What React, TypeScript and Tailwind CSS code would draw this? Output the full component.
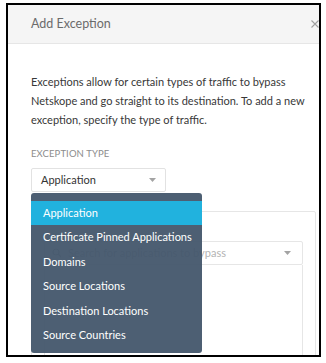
import React from "react";

const items = [
  "Application",
  "Certificate Pinned Applications",
  "Domains",
  "Source Locations",
  "Destination Locations",
  "Source Countries",
];

function Caret() {
  return (
    <svg width="7" height="4" viewBox="0 0 7 4" className="shrink-0">
      <path d="M0 0 L7 0 L3.5 4 Z" fill="#a3a3a3" />
    </svg>
  );
}

export default function App() {
  return (
    <div
      className="w-[326px] h-[363px] bg-white pt-[3px] pl-[6px]"
      style={{ fontFamily: "Lato, 'Noto Sans', sans-serif" }}
    >
      <div className="w-[315px] h-[354px] border-2 border-black overflow-hidden bg-white">
        <div className="w-[331px]">
          {/* Header */}
          <div className="h-[39px] bg-[#f5f5f5] border-b border-[#e6e6e6] flex items-center justify-between pl-[23px] pr-[20px]">
            <span className="text-[12.5px] text-[#6b6b6b]">Add Exception</span>
            <svg width="8" height="8" viewBox="0 0 8 8">
              <path d="M0.5 0.5 L7.5 7.5 M7.5 0.5 L0.5 7.5" stroke="#a0a0a0" strokeWidth="1.1" />
            </svg>
          </div>

          {/* Body */}
          <div className="px-[23px] pt-[28px]">
            <p className="text-[11px] leading-[19px] text-[#383838]">
              Exceptions allow for certain types of traffic to bypass Netskope and go straight to its
              destination. To add a new exception, specify the type of traffic.
            </p>

            <div className="mt-[19px] text-[9.5px] leading-[12px] text-[#8c8c8c] tracking-[0.1px]">
              EXCEPTION TYPE
            </div>

            <div className="relative mt-[8px] w-[135px]">
              <div className="h-[24px] border border-[#e2e2e2] rounded-[2px] bg-white flex items-center justify-between pl-[9px] pr-[9px]">
                <span className="text-[11px] text-[#333]">Application</span>
                <Caret />
              </div>

              {/* Dropdown menu */}
              <div className="absolute left-0 top-[25px] w-[171px] z-10 rounded-[3px] bg-[#43566b]/[0.95] pt-[8px] pb-[6px]">
                {items.map((it, i) => (
                  <div
                    key={it}
                    className={
                      "h-[24.4px] flex items-center pl-[12px] text-[11px] text-white " +
                      (i === 0 ? "bg-[#21b2de]" : "")
                    }
                  >
                    {it}
                  </div>
                ))}
              </div>
            </div>

            {/* Box behind dropdown */}
            <div className="mt-[19px] w-[285px] h-[200px] border border-[#e6e6e6] rounded-[2px] px-[12px] pt-[29px]">
              <div className="h-[24px] border border-[#e6e6e6] rounded-[2px] flex items-center justify-between pl-[7px] pr-[11px]">
                <div className="flex items-center gap-[6px]">
                  <svg width="10" height="10" viewBox="0 0 10 10">
                    <circle cx="4" cy="4" r="3" stroke="#b0b0b0" strokeWidth="1.2" fill="none" />
                    <path d="M6.3 6.3 L9 9" stroke="#b0b0b0" strokeWidth="1.3" />
                  </svg>
                  <span className="text-[11px] text-[#b3b3b3]">Search for applications to bypass</span>
                </div>
                <Caret />
              </div>
              <div className="h-[120px] border border-t-0 border-[#e6e6e6]" />
            </div>
          </div>
        </div>
      </div>
    </div>
  );
}
